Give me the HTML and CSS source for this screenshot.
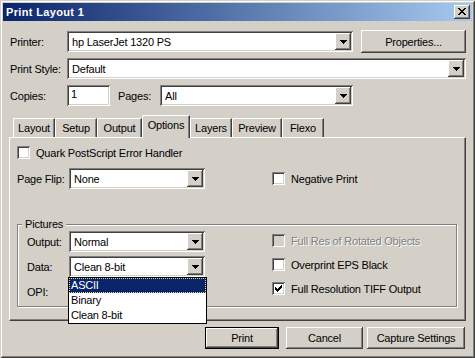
FILE: index.html
```html
<!DOCTYPE html>
<html lang="en">
<head>
    <meta charset="UTF-8">
    <title>Print Layout 1</title>
    <link rel="stylesheet" href="styles.css">
</head>
<body>
    <div class="window">
        <div class="titlebar">
            <span class="title">Print Layout 1</span>
            <span class="close">
                <svg width="8" height="7" viewBox="0 0 8 7" shape-rendering="crispEdges"><path d="M0 0h2v1h1v1h2v-1h1v-1h2v1h-1v1h-1v1h-1v1h1v1h1v1h1v1h-2v-1h-1v-1h-2v1h-1v1h-2v-1h1v-1h1v-1h1v-1h-1v-1h-1v-1h-1z" fill="#000"/></svg>
            </span>
        </div>

        <div class="main">
            <div class="field-row">
                <span class="label">Printer:</span>
                <div class="combo combo-printer">
                    <span class="combo-text">hp LaserJet 1320 PS</span>
                    <span class="combo-btn"><svg class="arrow" width="7" height="4" shape-rendering="crispEdges"><path d="M0 0h7v1h-1v1h-1v1h-1v1h-1v-1h-1v-1h-1v-1h-1z"/></svg></span>
                </div>
                <button class="btn btn-props">Properties...</button>
            </div>

            <div class="field-row row-style">
                <span class="label">Print Style:</span>
                <div class="combo combo-style">
                    <span class="combo-text">Default</span>
                    <span class="combo-btn"><svg class="arrow" width="7" height="4" shape-rendering="crispEdges"><path d="M0 0h7v1h-1v1h-1v1h-1v1h-1v-1h-1v-1h-1v-1h-1z"/></svg></span>
                </div>
            </div>

            <div class="field-row row-copies">
                <span class="label">Copies:</span>
                <div class="textbox">1</div>
                <span class="label label-pages">Pages:</span>
                <div class="combo combo-pages">
                    <span class="combo-text">All</span>
                    <span class="combo-btn"><svg class="arrow" width="7" height="4" shape-rendering="crispEdges"><path d="M0 0h7v1h-1v1h-1v1h-1v1h-1v-1h-1v-1h-1v-1h-1z"/></svg></span>
                </div>
            </div>

            <div class="tabs">
                <span class="tab tab-layout">Layout</span>
                <span class="tab tab-setup">Setup</span>
                <span class="tab tab-output">Output</span>
                <span class="tab tab-options active">Options</span>
                <span class="tab tab-layers">Layers</span>
                <span class="tab tab-preview">Preview</span>
                <span class="tab tab-flexo">Flexo</span>
            </div>

            <div class="panel">
                <label class="check">
                    <span class="box"></span>
                    <span>Quark PostScript Error Handler</span>
                </label>

                <div class="field-row row-flip">
                    <span class="label label-flip">Page Flip:</span>
                    <div class="combo combo-small">
                        <span class="combo-text">None</span>
                        <span class="combo-btn"><svg class="arrow" width="7" height="4" shape-rendering="crispEdges"><path d="M0 0h7v1h-1v1h-1v1h-1v1h-1v-1h-1v-1h-1v-1h-1z"/></svg></span>
                    </div>
                    <label class="check check-negative">
                        <span class="box"></span>
                        <span>Negative Print</span>
                    </label>
                </div>

                <fieldset class="group">
                    <legend>Pictures</legend>
                    <div class="group-body">
                        <div class="group-left">
                            <div class="field-row">
                                <span class="label label-pic">Output:</span>
                                <div class="combo combo-small">
                                    <span class="combo-text">Normal</span>
                                    <span class="combo-btn"><svg class="arrow" width="7" height="4" shape-rendering="crispEdges"><path d="M0 0h7v1h-1v1h-1v1h-1v1h-1v-1h-1v-1h-1v-1h-1z"/></svg></span>
                                </div>
                            </div>
                            <div class="field-row">
                                <span class="label label-pic">Data:</span>
                                <div class="combo combo-small combo-open">
                                    <span class="combo-text">Clean 8-bit</span>
                                    <span class="combo-btn"><svg class="arrow" width="7" height="4" shape-rendering="crispEdges"><path d="M0 0h7v1h-1v1h-1v1h-1v1h-1v-1h-1v-1h-1v-1h-1z"/></svg></span>
                                    <ul class="dropdown">
                                        <li class="selected">ASCII</li>
                                        <li>Binary</li>
                                        <li>Clean 8-bit</li>
                                    </ul>
                                </div>
                            </div>
                            <div class="field-row">
                                <span class="label label-pic">OPI:</span>
                            </div>
                        </div>
                        <div class="group-right">
                            <label class="check disabled">
                                <span class="box"></span>
                                <span>Full Res of Rotated Objects</span>
                            </label>
                            <label class="check">
                                <span class="box"></span>
                                <span>Overprint EPS Black</span>
                            </label>
                            <label class="check">
                                <span class="box"><svg width="9" height="9" shape-rendering="crispEdges"><path d="M7 1h1v1h-1z M6 2h2v1h-2z M1 3h1v1h-1z M5 3h3v1h-3z M1 4h2v1h-2z M4 4h3v1h-3z M1 5h5v1h-5z M2 6h3v1h-3z M3 7h1v1h-1z" fill="#000"/></svg></span>
                                <span>Full Resolution TIFF Output</span>
                            </label>
                        </div>
                    </div>
                </fieldset>
            </div>

            <div class="actions">
                <button class="btn btn-default">Print</button>
                <button class="btn btn-cancel">Cancel</button>
                <button class="btn btn-capture">Capture Settings</button>
            </div>
        </div>
    </div>
</body>
</html>
```

FILE: styles.css
```css
* {
    box-sizing: border-box;
}

body {
    margin: 0;
    background: #d4d0c8;
    font-family: 'Liberation Sans', Arial, sans-serif;
    font-size: 11px;
    letter-spacing: -0.2px;
    color: #000;
}

.window {
    width: 475px;
    height: 358px;
    padding: 3px;
    background: #d4d0c8;
    box-shadow: inset 1px 1px #d4d0c8, inset -1px -1px #404040,
                inset 2px 2px #fff, inset -2px -2px #808080;
}

.titlebar {
    height: 18px;
    display: flex;
    align-items: center;
    justify-content: space-between;
    padding: 0 2px 0 3px;
    background: linear-gradient(to right, #0a246a, #a6caf0);
    color: #fff;
}

.title {
    font-weight: bold;
    letter-spacing: 0.35px;
}

.close {
    width: 16px;
    height: 14px;
    display: flex;
    align-items: center;
    justify-content: center;
    padding: 0 1px 1px 0;
    background: #d4d0c8;
    box-shadow: inset -1px -1px #404040, inset 1px 1px #fff, inset -2px -2px #808080;
}

.main {
    padding: 9px 6px 0 6px;
}

.field-row {
    display: flex;
    align-items: center;
}

.label {
    width: 58px;
    padding-left: 1px;
    flex-shrink: 0;
}

/* combo boxes */
.combo {
    height: 21px;
    display: flex;
    align-items: center;
    padding: 2px;
    background: #fff;
    box-shadow: inset 1px 1px #808080, inset -1px -1px #fff,
                inset 2px 2px #404040, inset -2px -2px #d4d0c8;
}

.combo-text {
    flex: 1;
    padding-left: 3px;
    white-space: nowrap;
}

.combo-btn {
    width: 16px;
    height: 17px;
    display: flex;
    align-items: center;
    justify-content: center;
    padding-top: 1px;
    background: #d4d0c8;
    box-shadow: inset -1px -1px #404040, inset 1px 1px #fff, inset -2px -2px #808080;
}

.arrow {
    fill: #000;
}

.combo-printer {
    width: 286px;
    margin-right: 8px;
}

.combo-style {
    width: 399px;
}

.combo-pages {
    width: 193px;
}

.combo-small {
    width: 136px;
}

.textbox {
    width: 43px;
    height: 21px;
    padding: 3px 0 0 4px;
    background: #fff;
    box-shadow: inset 1px 1px #808080, inset -1px -1px #fff,
                inset 2px 2px #404040, inset -2px -2px #d4d0c8;
}

.row-style {
    margin-top: 5px;
}

.row-copies {
    margin-top: 6px;
}

.label-pages {
    width: 42px;
    margin-left: 8px;
    padding-left: 0;
}

/* buttons */
.btn {
    height: 22px;
    padding: 0;
    border: none;
    background: #d4d0c8;
    font: inherit;
    letter-spacing: inherit;
    color: #000;
    box-shadow: inset -1px -1px #404040, inset 1px 1px #fff, inset -2px -2px #808080;
}

.btn-props {
    width: 105px;
    height: 23px;
}

/* tabs */
.tabs {
    display: flex;
    align-items: flex-end;
    height: 22px;
    margin-top: 9px;
    padding-left: 4px;
}

.tab {
    height: 19px;
    display: flex;
    align-items: center;
    justify-content: center;
    padding-bottom: 1px;
    border-top: 1px solid #fff;
    border-left: 1px solid #fff;
    border-right: 1px solid #404040;
    border-top-left-radius: 2px;
    box-shadow: inset -1px 0 #808080;
}

.tab-layout { width: 42px; }
.tab-setup { width: 42px; }
.tab-output { width: 45px; }
.tab-options { width: 48px; }
.tab-layers { width: 42px; }
.tab-preview { width: 50px; }
.tab-flexo { width: 42px; }

.tab.active {
    height: 23px;
    margin-bottom: -1px;
    padding-bottom: 4px;
    position: relative;
    z-index: 1;
    background: #d4d0c8;
}

.panel {
    height: 184px;
    padding: 8px 0 0 7px;
    border-top: 1px solid #fff;
    border-left: 1px solid #fff;
    border-right: 1px solid #404040;
    border-bottom: 1px solid #404040;
    box-shadow: inset -1px -1px #808080;
}

/* checkboxes */
.check {
    display: flex;
    align-items: center;
    height: 13px;
}

.box {
    width: 13px;
    height: 13px;
    margin-right: 6px;
    padding: 2px;
    background: #fff;
    box-shadow: inset 1px 1px #808080, inset -1px -1px #fff,
                inset 2px 2px #404040, inset -2px -2px #d4d0c8;
}

.box svg {
    display: block;
}

.check.disabled {
    color: #808080;
    text-shadow: 1px 1px #fff;
}

.check.disabled .box {
    background: #d4d0c8;
}

.row-flip {
    margin-top: 9px;
}

.label-flip {
    width: 52px;
    padding-left: 0;
}

.check-negative {
    margin-left: 67px;
}

/* pictures group */
.group {
    width: 440px;
    margin: 29px 0 0 0;
    padding: 0 4px 4px 4px;
    border: 1px solid #808080;
    box-shadow: inset 1px 1px #fff, 1px 1px #fff;
}

.group legend {
    height: 13px;
    line-height: 13px;
    padding: 0 3px;
    background: #d4d0c8;
}

.group-body {
    display: flex;
    padding-left: 5px;
}

.group-left {
    display: flex;
    flex-direction: column;
    gap: 4px;
}

.group-left .field-row {
    height: 21px;
}

.label-pic {
    width: 42px;
    padding-left: 0;
}

.group-right {
    display: flex;
    flex-direction: column;
    gap: 11px;
    margin-left: 67px;
    padding-top: 3px;
}

/* open list of the Data combo */
.combo-open {
    position: relative;
}

.dropdown {
    position: absolute;
    top: 100%;
    left: -1px;
    z-index: 2;
    width: 139px;
    margin: 0;
    padding: 0;
    list-style: none;
    background: #fff;
    border: 1px solid #000;
}

.dropdown li {
    height: 15px;
    line-height: 13px;
    padding-left: 1px;
    border: 1px solid transparent;
}

.dropdown li.selected {
    background: #0a246a;
    color: #fff;
    border: 1px dotted #e6dc96;
}

/* bottom buttons */
.actions {
    display: flex;
    justify-content: flex-end;
    margin-top: 6px;
}

.btn-default {
    width: 74px;
    margin-right: 7px;
    border: 1px solid #000;
}

.btn-cancel {
    width: 77px;
    margin-right: 4px;
}

.btn-capture {
    width: 98px;
    margin-right: 1px;
}
```
